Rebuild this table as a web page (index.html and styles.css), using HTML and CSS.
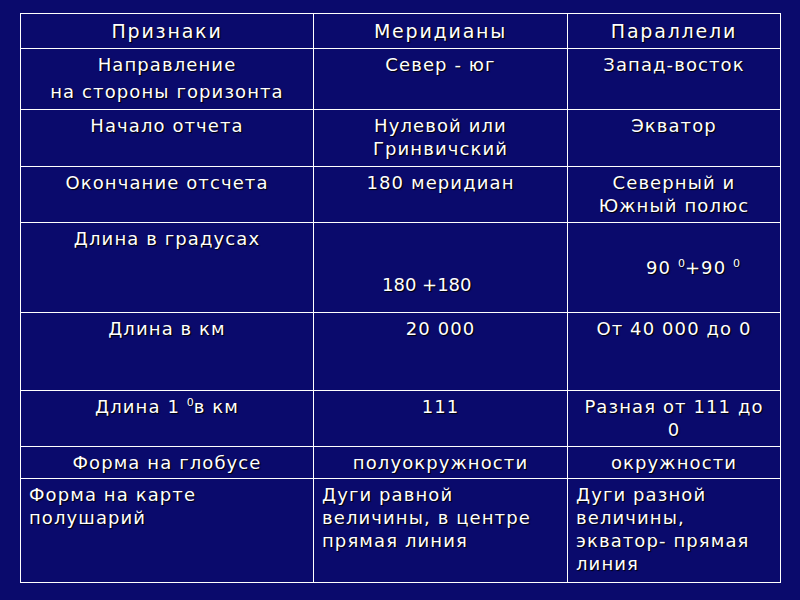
FILE: index.html
```html
<!DOCTYPE html>
<html lang="ru">
<head>
<meta charset="utf-8">
<title>Меридианы и параллели</title>
<link rel="stylesheet" href="styles.css">
</head>
<body>
<table class="grid">
  <colgroup><col class="c1"><col class="c2"><col class="c3"></colgroup>
  <tr class="row-head"><th>Признаки</th><th>Меридианы</th><th>Параллели</th></tr>
  <tr class="row-dir"><td><span class="line">Направление</span><span class="line gap">на стороны горизонта</span></td><td>Север - юг</td><td>Запад-восток</td></tr>
  <tr class="row-start"><td>Начало отчета</td><td>Нулевой или<br>Гринвичский</td><td>Экватор</td></tr>
  <tr class="row-end"><td>Окончание отсчета</td><td>180 меридиан</td><td>Северный и<br>Южный полюс</td></tr>
  <tr class="row-deg"><td>Длина в градусах</td><td class="deg-mer">180 +180</td><td class="deg-par">90 <sup>0</sup>+90 <sup>0</sup></td></tr>
  <tr class="row-km"><td>Длина в км</td><td>20 000</td><td>От 40 000 до 0</td></tr>
  <tr class="row-one"><td>Длина 1 <sup>0</sup>в км</td><td>111</td><td>Разная от 111 до<br>0</td></tr>
  <tr class="row-globe"><td>Форма на глобусе</td><td>полуокружности</td><td>окружности</td></tr>
  <tr class="row-map"><td class="left">Форма на карте<br>полушарий</td><td class="left">Дуги равной<br>величины, в центре<br>прямая линия</td><td class="left">Дуги разной<br>величины,<br>экватор- прямая<br>линия</td></tr>
</table>
</body>
</html>
```
FILE: styles.css
```css
html, body {
  margin: 0;
  height: 100%;
}
body {
  padding: 13px 20px;
  box-sizing: border-box;
  background: #0a0a6c;
  color: #fff;
  font-family: "DejaVu Sans", "Noto Sans", sans-serif;
}
.grid {
  border-collapse: collapse;
  table-layout: fixed;
  width: 760px;
}
.c1 { width: 293px; }
.c2 { width: 254px; }
.c3 { width: 213px; }
.grid th,
.grid td {
  border: 1px solid #fff;
  padding: 4px 8px;
  font-size: 18px;
  font-weight: normal;
  line-height: 23px;
  letter-spacing: 1.1px;
  text-align: center;
  vertical-align: top;
  text-shadow: 1px 1px 1px #000;
}
.grid th {
  font-size: 19px;
  letter-spacing: 1.8px;
}
.grid sup {
  font-size: 11px;
  line-height: 0;
  letter-spacing: 0;
  vertical-align: 7px;
}
.line { display: block; }
.line.gap { margin-top: 4px; }
.row-head { height: 35px; }
.row-head th { vertical-align: middle; padding-top: 2px; padding-bottom: 2px; }
.row-dir { height: 61px; }
.row-start { height: 57px; }
.row-end { height: 56px; }
.row-deg { height: 90px; }
.row-km { height: 78px; }
.row-one { height: 56px; }
.row-globe { height: 32px; }
.row-globe td { vertical-align: middle; }
.row-map { height: 104px; }
.grid td.left { text-align: left; }
.grid td.deg-mer {
  text-align: left;
  letter-spacing: 0;
  padding-left: 68px;
  padding-top: 50px;
}
.grid td.deg-par {
  text-align: left;
  padding-left: 78px;
  vertical-align: middle;
}
```
